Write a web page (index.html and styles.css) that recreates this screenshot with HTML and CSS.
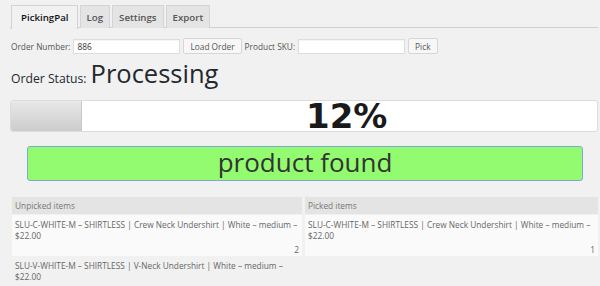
FILE: index.html
```html
<!DOCTYPE html>
<html>
<head>
<meta charset="utf-8">
<link rel="stylesheet" href="styles.css">
</head>
<body>
<div class="wrap">
  <nav class="tabs">
    <span class="tab active">PickingPal</span>
    <span class="tab">Log</span>
    <span class="tab">Settings</span>
    <span class="tab">Export</span>
  </nav>
  <div class="form-row">
    <label class="lbl">Order Number:</label>
    <input class="field" type="text" value="886">
    <button class="btn">Load Order</button>
    <label class="lbl">Product SKU:</label>
    <input class="field" type="text" value="">
    <button class="btn">Pick</button>
  </div>
  <div class="status">
    <span class="status-lbl">Order Status:</span>
    <span class="status-val">Processing</span>
  </div>
  <div class="progress">
    <div class="progress-fill" style="width:12%"></div>
    <div class="progress-label">12%</div>
  </div>
  <div class="notice">product found</div>
  <div class="lists">
    <div class="list">
      <div class="list-head">Unpicked items</div>
      <div class="item odd">
        <div class="item-text">SLU-C-WHITE-M – SHIRTLESS | Crew Neck Undershirt | White – medium – $22.00</div>
        <div class="qty">2</div>
      </div>
      <div class="item">
        <div class="item-text">SLU-V-WHITE-M – SHIRTLESS | V-Neck Undershirt | White – medium – $22.00</div>
      </div>
    </div>
    <div class="list">
      <div class="list-head">Picked items</div>
      <div class="item odd">
        <div class="item-text">SLU-C-WHITE-M – SHIRTLESS | Crew Neck Undershirt | White – medium – $22.00</div>
        <div class="qty">1</div>
      </div>
    </div>
  </div>
</div>
</body>
</html>
```
FILE: styles.css
```css
html, body {
  margin: 0;
  padding: 0;
  background: #f1f1f1;
  font-family: "Open Sans", "DejaVu Sans", sans-serif;
  overflow: hidden;
}
.wrap {
  padding: 0 2px 0 10px;
}
.tabs {
  display: flex;
  gap: 2px;
  padding: 5px 0 0 1px;
  border-bottom: 1px solid #cfcfcf;
  height: 22px;
}
.tab {
  display: flex;
  align-items: center;
  padding: 0 6px;
  height: 22px;
  border: 1px solid #d4d4d4;
  border-bottom: none;
  background: #e4e4e4;
  color: #555;
  font-size: 9.7px;
  font-weight: 600;
}
.tab.active {
  background: #f1f1f1;
  color: #111;
  height: 23px;
  padding: 0 8px 0 9px;
}
.form-row {
  display: flex;
  align-items: center;
  gap: 3px;
  margin-top: 10px;
  margin-left: 1px;
  height: 16px;
}
.lbl {
  font-size: 8.3px;
  color: #555;
}
.field {
  box-sizing: border-box;
  width: 107px;
  height: 15px;
  border: 1px solid #ddd;
  background: #fff;
  font-family: "Open Sans", sans-serif;
  font-size: 8.3px;
  color: #333;
  padding: 0 3px;
  margin: 0;
  box-shadow: inset 0 1px 1px rgba(0,0,0,0.05);
}
.btn {
  box-sizing: border-box;
  height: 16px;
  border: 1px solid #d6d6d6;
  border-radius: 2px;
  background: #f7f7f7;
  color: #555;
  font-family: "Open Sans", sans-serif;
  font-size: 8.3px;
  padding: 0 6px;
  margin: 0;
}
.status {
  display: flex;
  align-items: baseline;
  gap: 4px;
  margin-left: 1px;
  margin-top: 2px;
  color: #23282d;
}
.status-lbl {
  font-size: 12.2px;
}
.status-val {
  font-size: 25.5px;
}
.progress {
  position: relative;
  box-sizing: border-box;
  height: 32px;
  margin-top: 10px;
  border: 1px solid #dcdcdc;
  border-radius: 3px;
  background: #fff;
}
.progress-fill {
  height: 100%;
  border-radius: 2px 0 0 2px;
  background: linear-gradient(#e8e8e8, #cccccc);
  border-right: 1px solid #c8c8c8;
}
.progress-label {
  position: absolute;
  left: calc(50% + 2px);
  top: 0;
  line-height: 31px;
  font-family: "DejaVu Sans", sans-serif;
  font-weight: bold;
  font-size: 34px;
  color: #1a1a1a;
}
.notice {
  box-sizing: border-box;
  height: 35px;
  margin: 14px 15px 0 17px;
  border: 1px solid #7fa7d6;
  border-radius: 3px;
  background: #92fb6f;
  color: #333;
  font-size: 26px;
  text-align: center;
  line-height: 31px;
}
.lists {
  display: grid;
  grid-template-columns: 290px 1fr;
  gap: 3px;
  margin: 16px 0 0 2px;
}
.list-head {
  height: 17px;
  line-height: 17px;
  background: #e4e4e4;
  color: #777;
  font-size: 8.3px;
  padding-left: 3px;
  margin-bottom: 1px;
}
.item {
  padding: 4px 3px 0 3px;
  color: #666;
  font-size: 8.3px;
  line-height: 11px;
}
.item.odd {
  background: #fafafa;
  height: 37px;
  position: relative;
}
.item-text {
  width: 286px;
}
.qty {
  text-align: right;
  margin-top: 3px;
}
```
